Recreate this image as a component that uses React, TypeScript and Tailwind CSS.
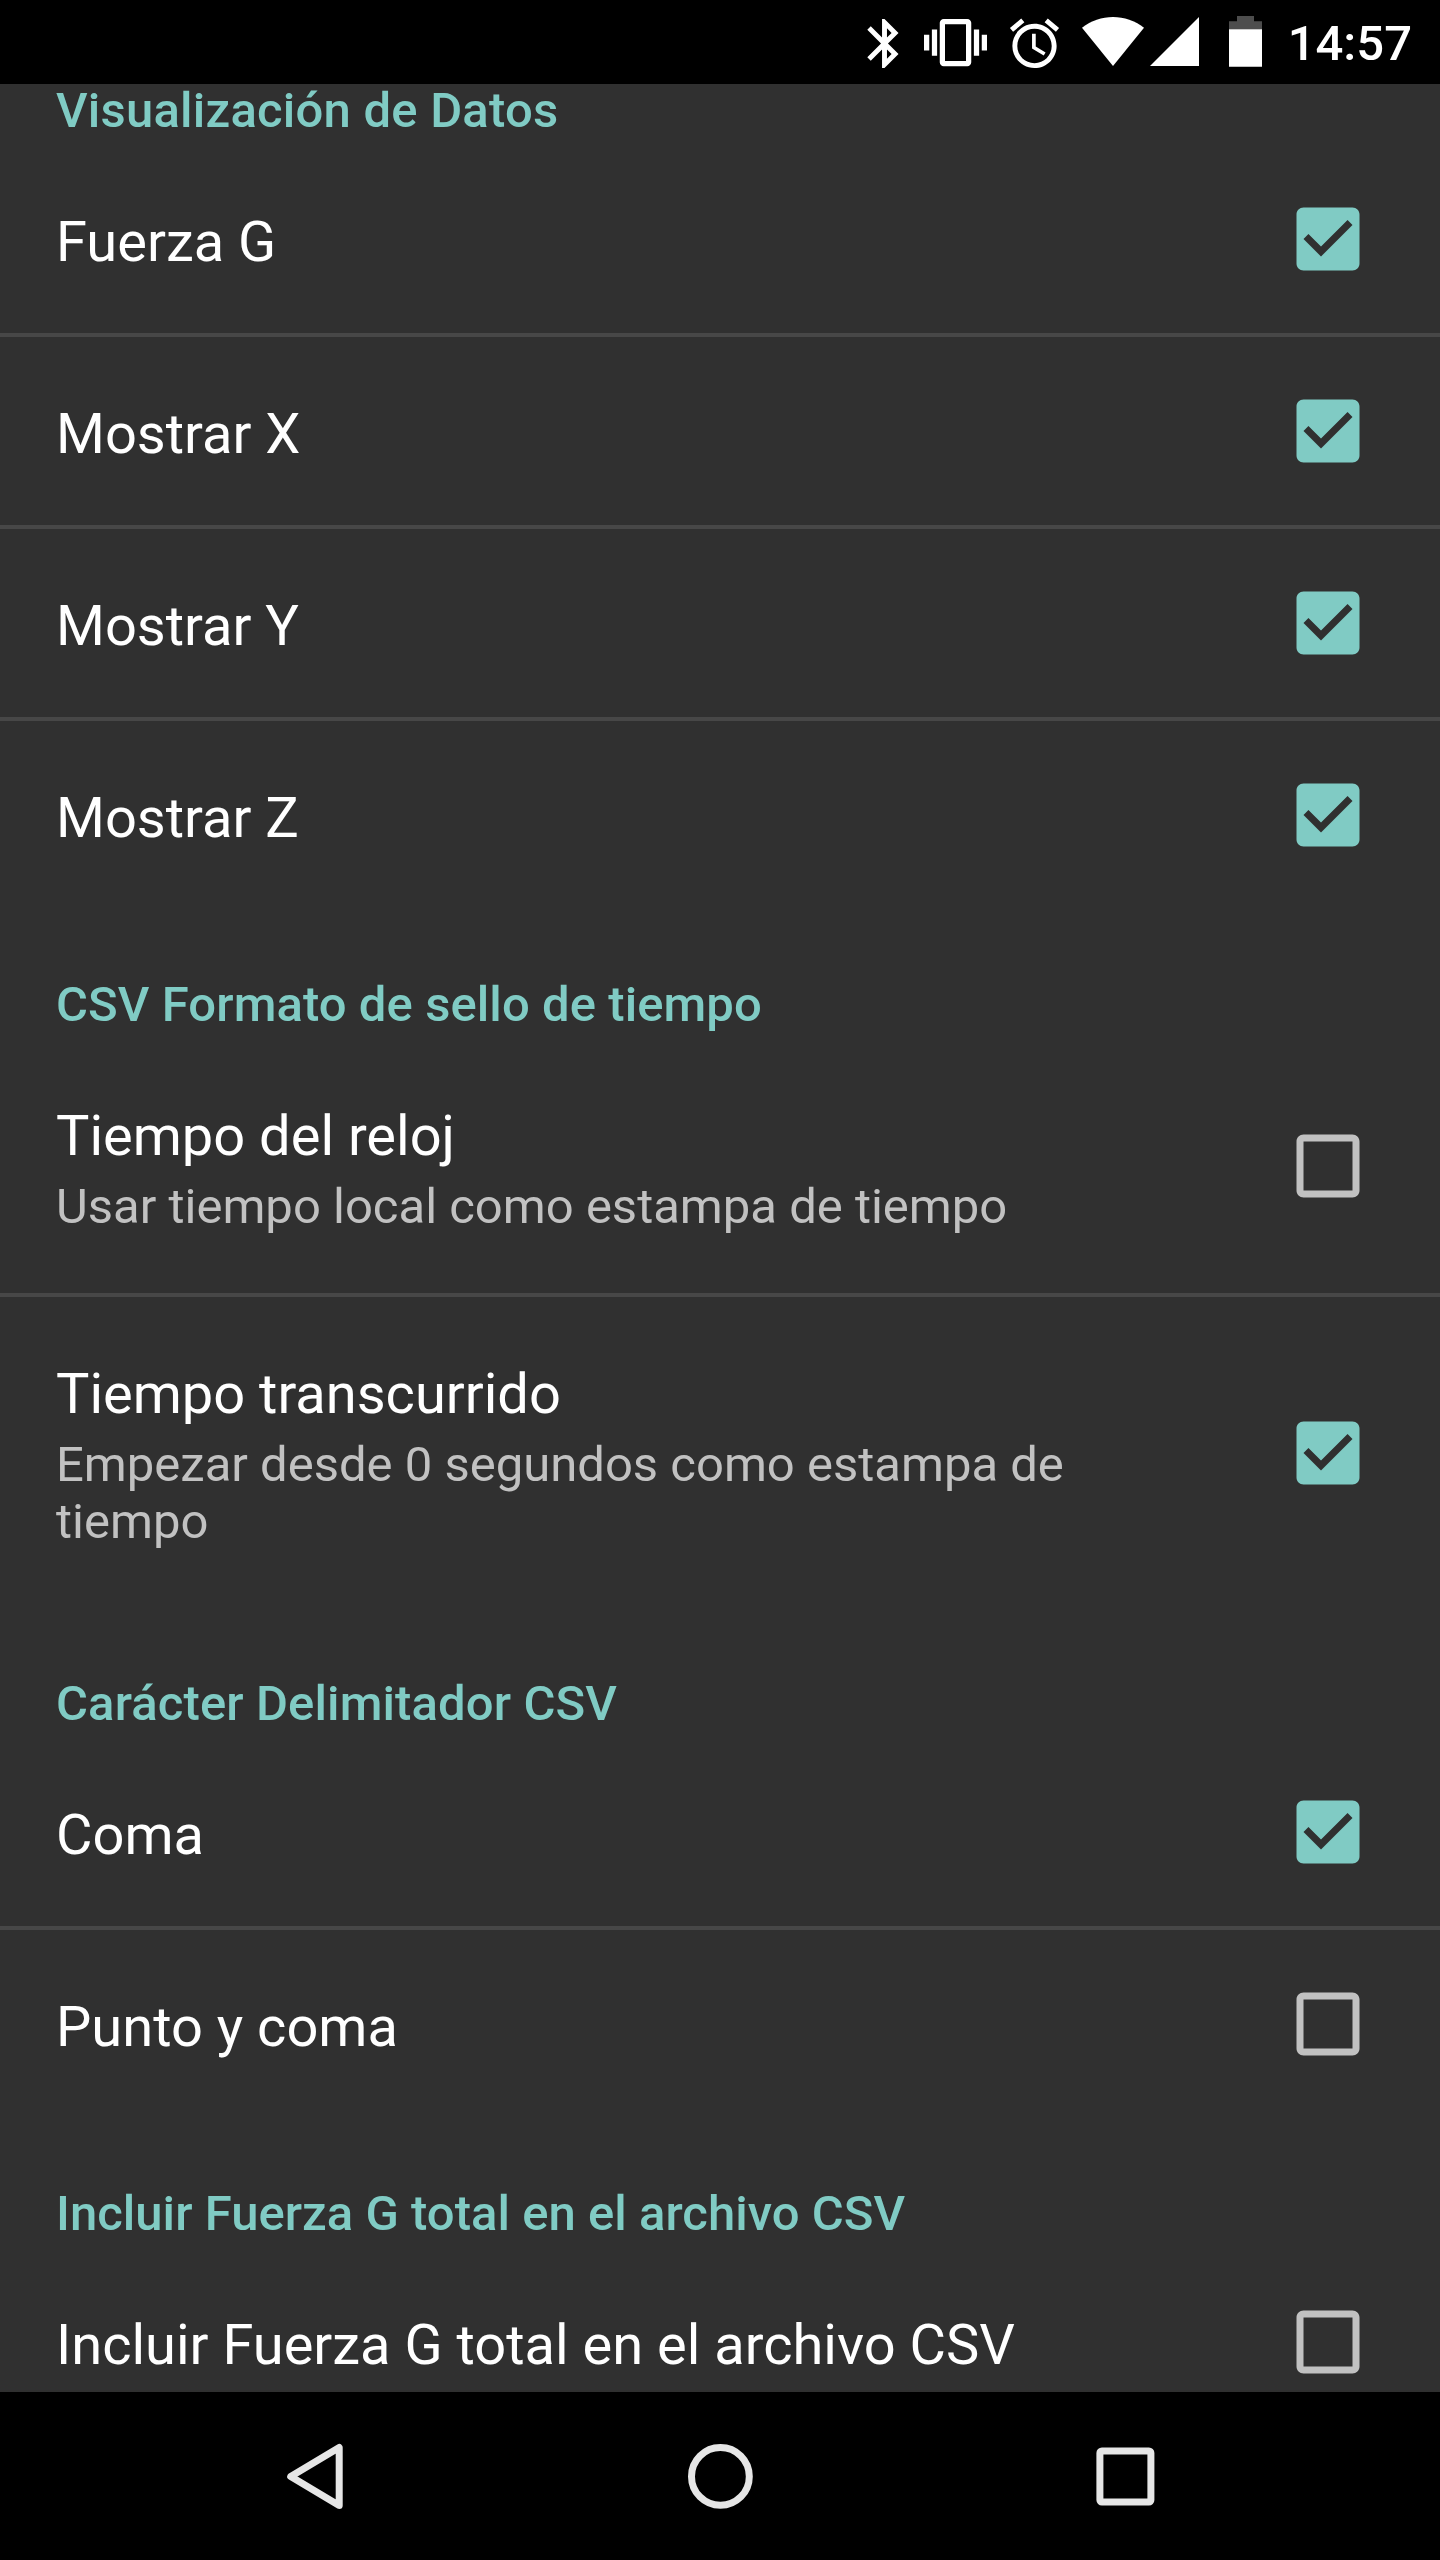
import { useState } from 'react';
import clsx from 'clsx';

type Preference = {
  id: string;
  title: string;
  summary?: string;
  checked: boolean;
};

type PreferenceCategory = {
  title: string;
  titleClassName?: string;
  items: Preference[];
};

const categories: PreferenceCategory[] = [
  {
    title: 'Visualización de Datos',
    titleClassName: 'tracking-[0.22px]',
    items: [
      { id: 'g-force', title: 'Fuerza G', checked: true },
      { id: 'show-x', title: 'Mostrar X', checked: true },
      { id: 'show-y', title: 'Mostrar Y', checked: true },
      { id: 'show-z', title: 'Mostrar Z', checked: true },
    ],
  },
  {
    title: 'CSV Formato de sello de tiempo',
    titleClassName: 'tracking-[0.08px]',
    items: [
      {
        id: 'clock-time',
        title: 'Tiempo del reloj',
        summary: 'Usar tiempo local como estampa de tiempo',
        checked: false,
      },
      {
        id: 'elapsed-time',
        title: 'Tiempo transcurrido',
        summary: 'Empezar desde 0 segundos como estampa de tiempo',
        checked: true,
      },
    ],
  },
  {
    title: 'Carácter Delimitador CSV',
    titleClassName: 'tracking-[0.12px]',
    items: [
      { id: 'comma', title: 'Coma', checked: true },
      { id: 'semicolon', title: 'Punto y coma', checked: false },
    ],
  },
  {
    title: 'Incluir Fuerza G total en el archivo CSV',
    titleClassName: 'tracking-[0.03px]',
    items: [{ id: 'total-g', title: 'Incluir Fuerza G total en el archivo CSV', checked: false }],
  },
];

const initialValues = Object.fromEntries(
  categories.flatMap((category) => category.items.map((item) => [item.id, item.checked])),
);

export default function App() {
  const [values, setValues] = useState<Record<string, boolean>>(initialValues);

  const toggle = (id: string) => {
    setValues((current) => ({ ...current, [id]: !current[id] }));
  };

  return (
    <div className="flex h-[2560px] w-[1440px] flex-col overflow-hidden bg-[#303030] font-['Roboto',sans-serif]">
      <StatusBar />
      <main className="min-h-0 flex-1">
        {/* the list is scrolled a little under the status bar */}
        <div className="-mt-[69px]">
          {categories.map((category) => (
            <section key={category.title}>
              <h2
                className={clsx(
                  'px-14 pt-[69px] pb-2 text-[49px] leading-[53px] font-medium text-[#80cbc4]',
                  category.titleClassName,
                )}
              >
                {category.title}
              </h2>
              <div className="divide-y-4 divide-[#474747]">
                {category.items.map((item) => (
                  <PreferenceRow
                    key={item.id}
                    item={item}
                    checked={values[item.id]}
                    onToggle={() => toggle(item.id)}
                  />
                ))}
              </div>
            </section>
          ))}
        </div>
      </main>
      <NavigationBar />
    </div>
  );
}

function PreferenceRow({
  item,
  checked,
  onToggle,
}: {
  item: Preference;
  checked: boolean;
  onToggle: () => void;
}) {
  return (
    <button
      type="button"
      role="checkbox"
      aria-checked={checked}
      className="flex w-full items-center justify-between pr-[70px] pl-14 text-left"
      onClick={onToggle}
    >
      <span className="block max-w-[1100px] pt-16 pb-[58px]">
        <span className="block text-[56px] leading-[66px] text-white">{item.title}</span>
        {item.summary && (
          <span className="mt-[9px] block text-[49px] leading-[57px] text-[#c1c1c1]">{item.summary}</span>
        )}
      </span>
      <CheckboxIcon checked={checked} />
    </button>
  );
}

function CheckboxIcon({ checked }: { checked: boolean }) {
  return (
    <svg
      className={clsx('size-[84px] shrink-0', checked ? 'text-[#80cbc4]' : 'text-[#c1c1c1]')}
      viewBox="0 0 24 24"
      fill="currentColor"
    >
      {checked ? (
        <path d="M19 3H5c-1.11 0-2 .9-2 2v14c0 1.1.89 2 2 2h14c1.11 0 2-.9 2-2V5c0-1.1-.89-2-2-2zm-9 14l-5-5 1.41-1.41L10 14.17l7.59-7.59L19 8l-9 9z" />
      ) : (
        <path d="M19 5v14H5V5h14m0-2H5c-1.1 0-2 .9-2 2v14c0 1.1.9 2 2 2h14c1.1 0 2-.9 2-2V5c0-1.1-.9-2-2-2z" />
      )}
    </svg>
  );
}

function StatusBar() {
  return (
    <header className="flex h-[84px] shrink-0 items-center justify-end bg-black pr-[28px] text-white">
      <svg className="mt-[2px] mr-[10px] size-[59px]" viewBox="0 0 24 24" fill="currentColor">
        <path d="M17.71 7.71L12 2h-1v7.59L6.41 5 5 6.41 10.59 12 5 17.59 6.41 19 11 14.41V22h1l5.71-5.71-4.3-4.29 4.3-4.29zM13 5.83l1.88 1.88L13 9.59V5.83zm1.88 10.46L13 18.17v-3.76l1.88 1.88z" />
      </svg>
      <svg className="mt-px mr-[18px] size-[63px]" viewBox="0 0 24 24" fill="currentColor">
        <path d="M0 15h2V9H0v6zm3 2h2V7H3v10zm19-8v6h2V9h-2zm-3 8h2V7h-2v10zM16.5 3h-9C6.67 3 6 3.67 6 4.5v15c0 .83.67 1.5 1.5 1.5h9c.83 0 1.5-.67 1.5-1.5v-15c0-.83-.67-1.5-1.5-1.5zM16 19H8V5h8v14z" />
      </svg>
      <svg className="mt-[2px] mr-[18px] size-[59px]" viewBox="0 0 24 24" fill="currentColor">
        <path d="M22 5.72l-4.6-3.86-1.29 1.53 4.6 3.86L22 5.72zM7.88 3.39L6.6 1.86 2 5.71l1.29 1.53 4.59-3.85zM12.5 8H11v6l4.75 2.85.75-1.23-4-2.37V8zM12 4c-4.97 0-9 4.03-9 9s4.02 9 9 9c4.97 0 9-4.03 9-9s-4.03-9-9-9zm0 16c-3.87 0-7-3.13-7-7s3.13-7 7-7 7 3.13 7 7-3.13 7-7 7z" />
      </svg>
      <svg className="mr-[6px] h-[84px] w-[62px]" viewBox="0 0 62 84" fill="currentColor">
        <path d="M31 66L0 27.7C9 20.6 20 17 31 17s22 3.6 31 10.7z" />
      </svg>
      <svg className="mr-[30px] h-[84px] w-[49px]" viewBox="0 0 49 84" fill="currentColor">
        <path d="M0 66L49 17v49z" />
      </svg>
      <svg className="mr-[26px] h-[84px] w-[33px]" viewBox="0 0 33 84" fill="currentColor">
        <path className="text-[#4d4d4d]" d="M0 29.5V21.3h8V16h17v5.3h8v8.2z" />
        <path d="M0 29.3h33v37.4H0z" />
      </svg>
      <span className="pt-1 text-[49px] leading-[80px] font-medium">14:57</span>
    </header>
  );
}

function NavigationBar() {
  return (
    <nav className="flex h-[168px] shrink-0 items-center justify-center gap-[321px] bg-black text-[#e6e6e6]">
      <button type="button" aria-label="Atrás">
        <svg className="size-[84px]" viewBox="0 0 84 84" fill="none" stroke="currentColor" strokeWidth="7">
          <path d="M17.7 42.5L66.2 13.5V71.5Z" strokeLinejoin="round" />
        </svg>
      </button>
      <button type="button" aria-label="Inicio">
        <svg className="size-[84px]" viewBox="0 0 84 84" fill="none" stroke="currentColor" strokeWidth="7">
          <circle cx="42.4" cy="42.4" r="28.9" />
        </svg>
      </button>
      <button type="button" aria-label="Recientes">
        <svg className="size-[84px]" viewBox="0 0 84 84" fill="none" stroke="currentColor" strokeWidth="7">
          <rect x="16.9" y="17" width="51" height="51" rx="2" />
        </svg>
      </button>
    </nav>
  );
}
